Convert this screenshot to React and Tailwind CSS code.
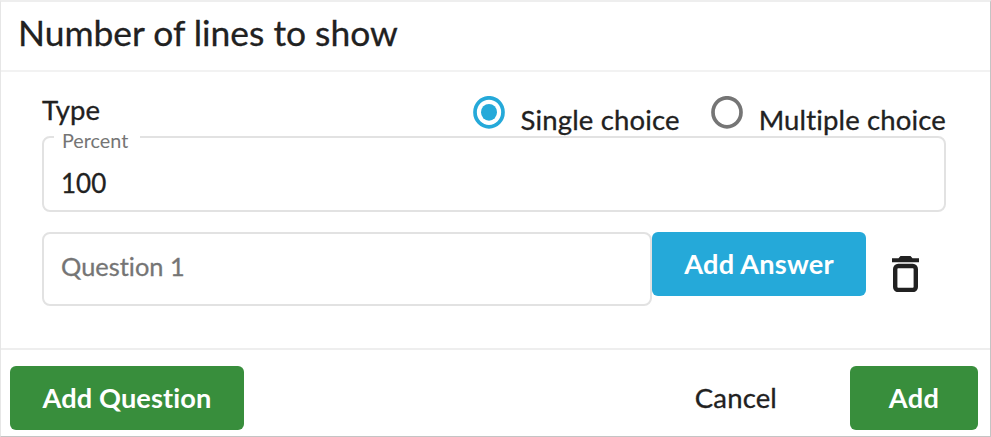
import React, { useState } from 'react';

const RadioOption = ({ label, checked, onSelect }) => (
  <button
    type="button"
    role="radio"
    aria-checked={checked}
    onClick={onSelect}
    className="flex h-[42px] items-start"
  >
    <svg
      className={`h-[33px] w-8 ${checked ? 'text-[#25a9d9]' : 'text-[#757575]'}`}
      viewBox="0 0 32 33"
      fill="none"
    >
      <ellipse cx="16" cy="16.3" rx="14" ry="14.5" stroke="currentColor" strokeWidth="3.7" />
      {checked && <ellipse cx="16" cy="16.3" rx="8" ry="8.4" fill="currentColor" />}
    </svg>
    <span className="ml-4 mt-2 whitespace-nowrap text-[27.5px] leading-8 tracking-[0.15px]">{label}</span>
  </button>
);

const TrashIcon = () => (
  <svg className="h-[36px] w-[27px]" viewBox="0 0 27 36" fill="none">
    <path d="M0 2.2h6.5L8.5 0h10l2 2.2H27v4H0z" fill="#212121" />
    <rect x="3.2" y="10" width="20.6" height="24" rx="3" stroke="#212121" strokeWidth="4.4" />
  </svg>
);

const App = () => {
  const [choice, setChoice] = useState('single');

  return (
    <div className="flex h-[437px] w-[991px] flex-col overflow-hidden border-t-2 border-r border-b border-l border-t-[#eeeeee] border-r-[#c4c4c4] border-b-[#c4c4c4] border-l-[#e6e6e6] bg-white font-['Lato',sans-serif] text-[#212121] [font-variant-ligatures:none] [-webkit-text-stroke:0.3px]">
      <header className="flex h-[70px] shrink-0 items-start border-b-2 border-[#f2f2f2] pl-[17px] pt-[11px]">
        <h2 className="whitespace-nowrap text-[35.4px] leading-10">Number of lines to show</h2>
      </header>

      <main className="flex h-[276px] shrink-0 flex-col pl-[41px] pr-11">
        <div className="flex h-16 shrink-0 items-start justify-between">
          <span className="mt-[22px] text-[27.5px] leading-8">Type</span>
          <div role="radiogroup" className="mt-6 flex items-start gap-[31px]">
            <RadioOption
              label="Single choice"
              checked={choice === 'single'}
              onSelect={() => setChoice('single')}
            />
            <RadioOption
              label="Multiple choice"
              checked={choice === 'multiple'}
              onSelect={() => setChoice('multiple')}
            />
          </div>
        </div>

        <div className="relative flex h-[76px] shrink-0 items-start rounded-lg border-2 border-[#e2e2e2] pl-[18px] pt-[29px]">
          <span className="absolute -top-2 left-[10px] h-5 w-[86px] bg-white pl-2 text-[19.8px] leading-5 text-[#757575] [-webkit-text-stroke:0]">
            Percent
          </span>
          <span className="-ml-px text-[26px] leading-8">100</span>
        </div>

        <div className="mt-5 flex items-start">
          <div className="flex h-[74px] w-[610px] items-start rounded-lg border-2 border-[#e2e2e2] pl-[17px] pt-[16px]">
            <span className="text-[25.4px] leading-8 text-[#757575]">Question 1</span>
          </div>
          <button className="h-16 w-[214px] rounded-md bg-[#25a9d9] text-[27.2px] font-bold leading-8 tracking-[0.2px] text-white [-webkit-text-stroke:0]">
            Add Answer
          </button>
          <button aria-label="Delete question" className="ml-[26px] mt-6">
            <TrashIcon />
          </button>
        </div>
      </main>

      <footer className="flex h-[88px] shrink-0 items-start border-t-2 border-[#eeeeee] pl-[9px] pr-3 pt-4">
        <button className="h-16 w-[234px] rounded-md bg-[#388e3c] text-[27.2px] font-bold leading-8 tracking-[0.1px] text-white [-webkit-text-stroke:0]">
          Add Question
        </button>
        <button className="ml-auto mr-[73px] h-16 text-[27.5px] leading-8 tracking-[0.15px]">Cancel</button>
        <button className="h-16 w-32 rounded-md bg-[#388e3c] text-[27.2px] font-bold leading-8 tracking-[0.3px] text-white [-webkit-text-stroke:0]">
          Add
        </button>
      </footer>
    </div>
  );
};

export default App;
